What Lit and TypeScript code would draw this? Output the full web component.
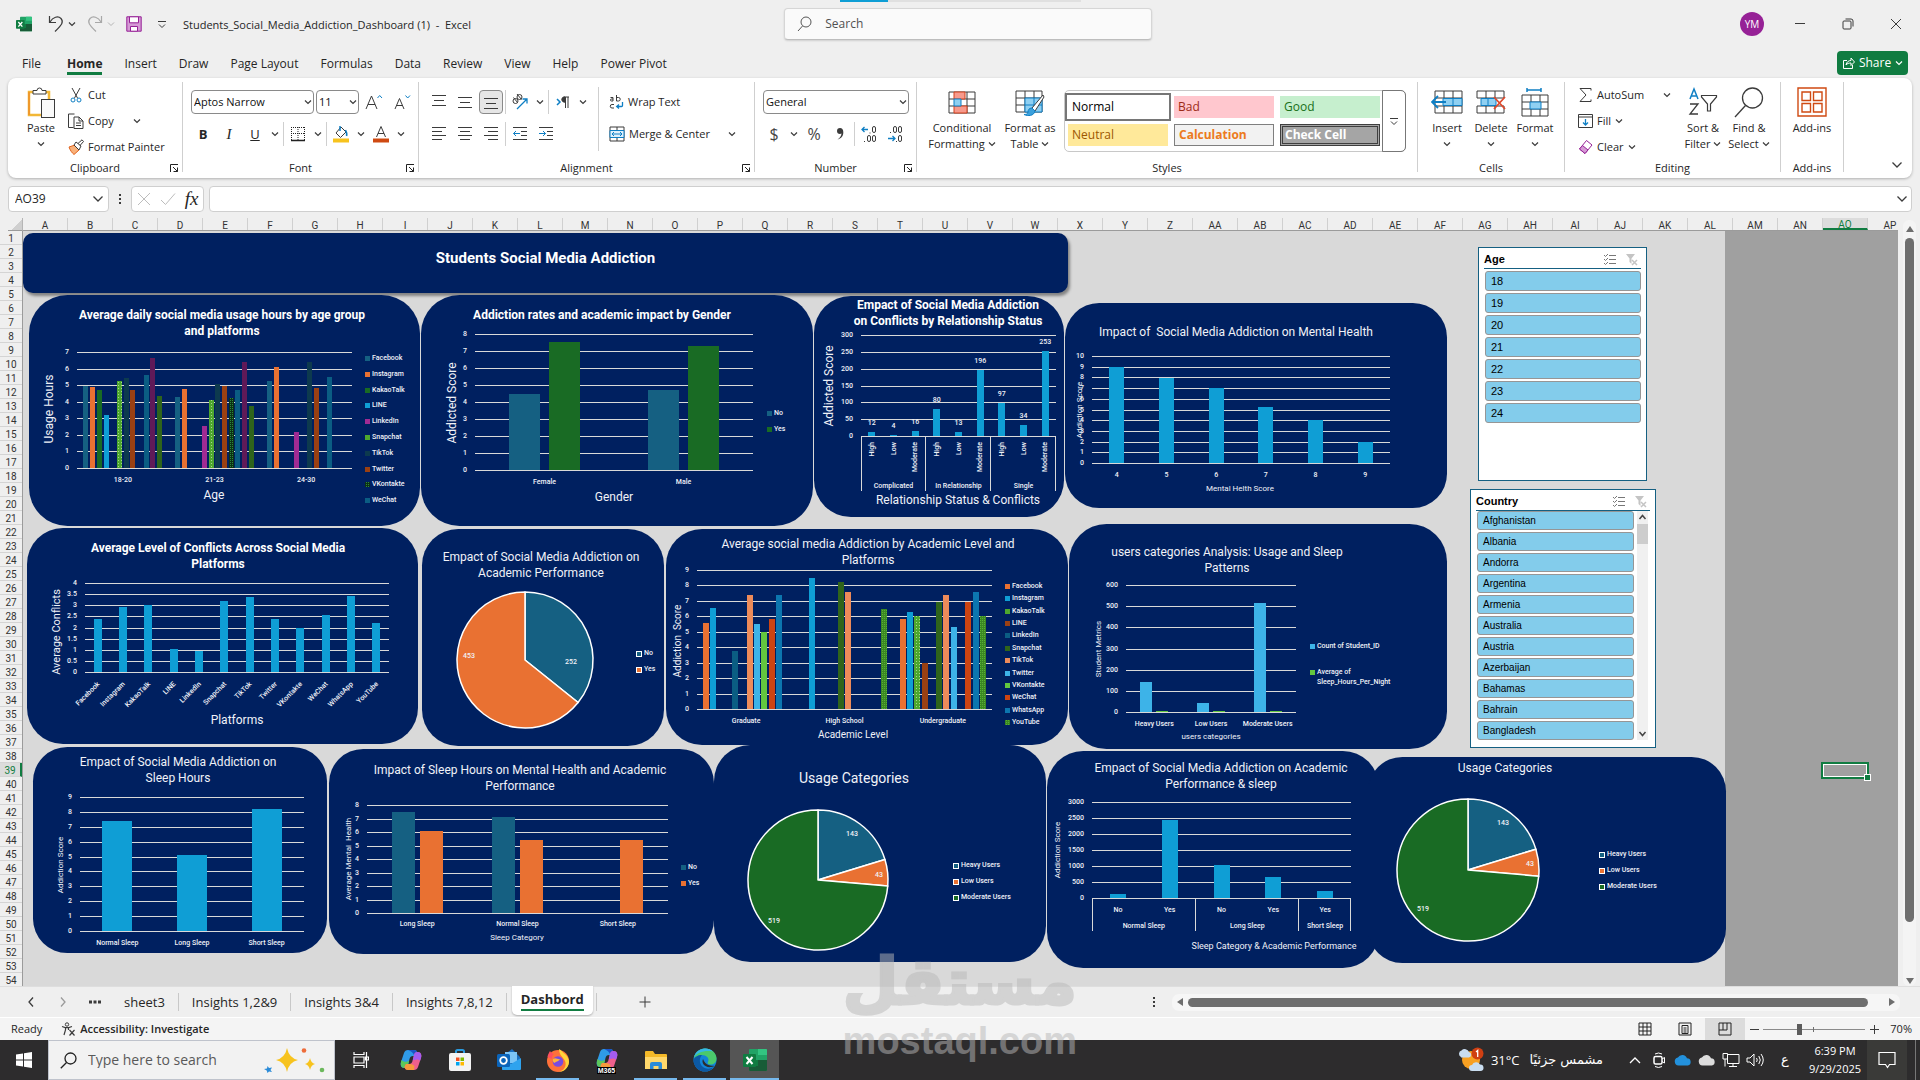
import { LitElement, html, svg, css, nothing, TemplateResult } from "lit";
import { customElement, property } from "lit/decorators.js";
import { styleMap } from "lit/directives/style-map.js";

/* ---------- palette ---------- */
const TEAL = "#156082";
const ORANGE = "#E97132";
const GREEN = "#196B24";
const BLUE = "#0F9ED5";
const SKY = "#3DB3E8";
const PURPLE = "#A02B93";
const RUST = "#9A4013";
const OLIVE = "#2F641B";
const DEEP = "#0B5D83";
const INK = "#0D3A4E";
const PLUM = "#601A58";
const PEACH = "#ED8B5A";
const BRICK = "#CC4412";
const OCEAN = "#0C76AF";

/* The sheet starts below and right of its headers. */
const ORIGIN_X = 23;
const ORIGIN_Y = 231;

interface TitleSpec { x: number; y: number; size: number; bold?: boolean; lines: string[] }
interface AxisTitle { x: number; y: number; size: number; text: string }
interface LegendSpec { x: number; y: number; gap: number; items: [string, string][]; boxed?: boolean }
interface ChartSpec {
  box: [number, number, number, number];
  title: TitleSpec;
  xTitle?: AxisTitle;
  yTitle?: AxisTitle;
  legend?: LegendSpec;
  plot?: [number, number, number, number];
  max?: number;
  step?: number;
  colors?: string[];
  data?: (number | null)[][];
  barWidth?: number;
  pitch?: number;
  labels?: string[];
  labelY?: number;
  labelTurn?: number;
  showValues?: boolean;
  groups?: { names: [string, number][]; y: number; bottom: number };
  pie?: { x: number; y: number; r: number; slices: [number, string, number, number][] };
}

const CHARTS: ChartSpec[] = [
  {
    box: [29, 295, 420, 526],
    title: { x: 222, y: 315, size: 12, bold: true, lines: ["Average daily social media usage hours by age group", "and platforms"] },
    xTitle: { x: 214, y: 495, size: 12, text: "Age" },
    yTitle: { x: 49, y: 409, size: 12, text: "Usage Hours" },
    plot: [77, 352, 352, 468], max: 7, step: 1,
    colors: [TEAL, ORANGE, GREEN, BLUE, PURPLE, "url(#dotLime)", INK, RUST, "url(#dotDark)", DEEP, PLUM, OLIVE],
    data: [
      [4.95, 4.9, 4.73, 3.22, null, 5.27, 5.45, 4.73, null, 5.63, 6.66, 4.37],
      [4.3, 4.79, null, null, 2.55, 4.12, 5.09, 4.97, 4.24, 4.73, 6.42, 3.76],
      [5.27, 6.12, null, null, 2.19, null, 6.42, 4.85, null, 5.51, null, null],
    ],
    barWidth: 5, pitch: 6.7, labels: ["18-20", "21-23", "24-30"], labelY: 480,
    legend: {
      x: 365, y: 358, gap: 15.8,
      items: [["Facebook", TEAL], ["Instagram", ORANGE], ["KakaoTalk", GREEN], ["LINE", BLUE], ["LinkedIn", PURPLE], ["Snapchat", "#4EA72E"], ["TikTok", INK], ["Twitter", RUST], ["VKontakte", "url(#dotDark)"], ["WeChat", DEEP]],
    },
  },
  {
    box: [421, 295, 813, 526],
    title: { x: 602, y: 315, size: 12, bold: true, lines: ["Addiction rates and academic impact by Gender"] },
    xTitle: { x: 614, y: 497, size: 12, text: "Gender" },
    yTitle: { x: 452, y: 403, size: 12, text: "Addicted Score" },
    plot: [475, 334, 753, 470], max: 8, step: 1,
    colors: [TEAL, GREEN], data: [[4.5, 7.55], [4.68, 7.32]], barWidth: 31, pitch: 40,
    labels: ["Female", "Male"], labelY: 482,
    legend: { x: 767, y: 413, gap: 16, items: [["No", TEAL], ["Yes", GREEN]] },
  },
  {
    box: [814, 296, 1064, 517],
    title: { x: 948, y: 305, size: 12, bold: true, lines: ["Empact of Social Media Addiction", "on Conflicts by Relationship Status"] },
    xTitle: { x: 958, y: 500, size: 12, text: "Relationship Status & Conflicts" },
    yTitle: { x: 829, y: 386, size: 12, text: "Addicted Score" },
    plot: [861, 335, 1056, 436], max: 300, step: 50,
    colors: [BLUE], data: [[12], [4], [16], [80], [13], [196], [97], [34], [253]], barWidth: 7, pitch: 7,
    labels: ["High", "Low", "Moderate", "High", "Low", "Moderate", "High", "Low", "Moderate"], labelY: 442, labelTurn: -90,
    showValues: true,
    groups: { names: [["Complicated", 3], ["In Relationship", 3], ["Single", 3]], y: 486, bottom: 491 },
  },
  {
    box: [1065, 303, 1447, 508],
    title: { x: 1236, y: 332, size: 12, lines: ["Impact of  Social Media Addiction on Mental Health"] },
    xTitle: { x: 1240, y: 488, size: 8, text: "Mental Helth Score" },
    yTitle: { x: 1079, y: 410, size: 8, text: "Addiction Score" },
    plot: [1092, 356, 1390, 463], max: 10, step: 1,
    colors: [BLUE], data: [[9], [7.95], [7], [5.25], [4], [2]], barWidth: 15, pitch: 15,
    labels: ["4", "5", "6", "7", "8", "9"], labelY: 475,
  },
  {
    box: [27, 528, 418, 744],
    title: { x: 218, y: 548, size: 12, bold: true, lines: ["Average Level of Conflicts Across Social Media", "Platforms"] },
    xTitle: { x: 237, y: 720, size: 12, text: "Platforms" },
    yTitle: { x: 56, y: 632, size: 11, text: "Average Conflicts" },
    plot: [85, 583, 389, 672], max: 4, step: 0.5,
    colors: [BLUE], data: [[2.4], [2.93], [2.99], [1.02], [0.93], [3.21], [3.39], [2.4], [2], [2.54], [3.43], [2.18]], barWidth: 8, pitch: 8,
    labels: ["Facebook", "Instagram", "KakaoTalk", "LINE", "LinkedIn", "Snapchat", "TikTok", "Twitter", "VKontakte", "WeChat", "WhatsApp", "YouTube"],
    labelY: 683, labelTurn: -45,
  },
  {
    box: [422, 529, 664, 746],
    title: { x: 541, y: 557, size: 12, lines: ["Empact of Social Media Addiction on", "Academic Performance"] },
    pie: { x: 525, y: 660, r: 68, slices: [[252, TEAL, 571, 662], [453, ORANGE, 469, 656]] },
    legend: { x: 636, y: 653, gap: 16, boxed: true, items: [["No", TEAL], ["Yes", ORANGE]] },
  },
  {
    box: [666, 529, 1068, 745],
    title: { x: 868, y: 544, size: 12, lines: ["Average social media Addiction by Academic Level and", "Platforms"] },
    xTitle: { x: 853, y: 734, size: 10, text: "Academic Level" },
    yTitle: { x: 677, y: 641, size: 10, text: "Addiction  Score" },
    plot: [697, 570, 992, 709], max: 9, step: 1,
    colors: [ORANGE, BLUE, "url(#dotLime)", RUST, DEEP, OLIVE, PEACH, SKY, "#63C73F", BRICK, OCEAN, "url(#dotMoss)"],
    data: [
      [5.6, 6.57, null, null, 3.78, null, 7.35, 5.53, 4.97, 5.8, 7.4, null],
      [null, 8.45, null, null, null, 8.2, 7.6, null, null, null, null, 6.5],
      [5.8, 6.3, 6, 2.95, null, 6.95, 7.4, 5.3, null, 6.95, 7.6, 6],
    ],
    barWidth: 6, pitch: 7.27, labels: ["Graduate", "High School", "Undergraduate"], labelY: 721,
    legend: {
      x: 1005, y: 586, gap: 12.36,
      items: [["Facebook", ORANGE], ["Instagram", BLUE], ["KakaoTalk", "#4EA72E"], ["LINE", RUST], ["LinkedIn", DEEP], ["Snapchat", OLIVE], ["TikTok", PEACH], ["Twitter", SKY], ["VKontakte", "#63C73F"], ["WeChat", BRICK], ["WhatsApp", OCEAN], ["YouTube", "url(#dotMoss)"]],
    },
  },
  {
    box: [1069, 524, 1447, 749],
    title: { x: 1227, y: 552, size: 12, lines: ["users categories Analysis: Usage and Sleep", "Patterns"] },
    xTitle: { x: 1211, y: 736, size: 8, text: "users categories" },
    yTitle: { x: 1098, y: 649, size: 8, text: "Student Metrics" },
    plot: [1126, 585, 1296, 712], max: 600, step: 100,
    colors: [SKY, "#63C73F"], data: [[143, 7], [44, 7], [517, 7]], barWidth: 12, pitch: 16,
    labels: ["Heavy Users", "Low Users", "Moderate Users"], labelY: 724,
    legend: { x: 1310, y: 646, gap: 26, items: [["Count of Student_ID", SKY], ["Average of\nSleep_Hours_Per_Night", "#63C73F"]] },
  },
  {
    box: [33, 747, 327, 953],
    title: { x: 178, y: 762, size: 12, lines: ["Empact of Social Media Addiction on", "Sleep Hours"] },
    yTitle: { x: 60, y: 865, size: 8, text: "Addiction Score" },
    plot: [80, 797, 304, 931], max: 9, step: 1,
    colors: [BLUE], data: [[7.41], [5.13], [8.22]], barWidth: 30, pitch: 30,
    labels: ["Normal Sleep", "Long Sleep", "Short Sleep"], labelY: 943,
  },
  {
    box: [329, 749, 714, 954],
    title: { x: 520, y: 770, size: 12, lines: ["Impact of Sleep Hours on Mental Health and Academic", "Performance"] },
    xTitle: { x: 517, y: 937, size: 8, text: "Sleep Category" },
    yTitle: { x: 348, y: 859, size: 8, text: "Average Mental  Health" },
    plot: [367, 805, 668, 913], max: 8, step: 1,
    colors: [TEAL, ORANGE], data: [[7.45, 6.1], [7.08, 5.44], [null, 5.44]], barWidth: 23, pitch: 28,
    labels: ["Long Sleep", "Normal Sleep", "Short Sleep"], labelY: 924,
    legend: { x: 681, y: 867, gap: 16, items: [["No", TEAL], ["Yes", ORANGE]] },
  },
  {
    box: [714, 745, 1046, 962],
    title: { x: 854, y: 778, size: 14, lines: ["Usage Categories"] },
    pie: { x: 818, y: 880, r: 70, slices: [[143, TEAL, 852, 834], [43, ORANGE, 879, 875], [519, GREEN, 774, 921]] },
    legend: { x: 953, y: 865, gap: 16, boxed: true, items: [["Heavy Users", TEAL], ["Low Users", ORANGE], ["Moderate Users", GREEN]] },
  },
  {
    box: [1047, 751, 1379, 968],
    title: { x: 1221, y: 768, size: 12, lines: ["Empact of Social Media Addiction on Academic", "Performance & sleep"] },
    xTitle: { x: 1274, y: 946, size: 9, text: "Sleep Category & Academic Performance" },
    yTitle: { x: 1057, y: 850, size: 8, text: "Addiction Score" },
    plot: [1092, 802, 1351, 898], max: 3000, step: 500,
    colors: [BLUE], data: [[135], [2448], [1042], [667], [229]], barWidth: 16, pitch: 16,
    labels: ["No", "Yes", "No", "Yes", "Yes"], labelY: 910,
    groups: { names: [["Normal Sleep", 2], ["Long Sleep", 2], ["Short Sleep", 1]], y: 926, bottom: 931 },
  },
  {
    box: [1368, 757, 1726, 963],
    title: { x: 1505, y: 768, size: 12, lines: ["Usage Categories"] },
    pie: { x: 1468, y: 870, r: 71, slices: [[143, TEAL, 1503, 823], [43, ORANGE, 1530, 864], [519, GREEN, 1423, 909]] },
    legend: { x: 1599, y: 854, gap: 16, boxed: true, items: [["Heavy Users", TEAL], ["Low Users", ORANGE], ["Moderate Users", GREEN]] },
  },
];

/* ---------- one chart card ---------- */
@customElement("sheet-chart")
class SheetChart extends LitElement {
  @property({ attribute: false }) spec!: ChartSpec;

  static styles = css`
    :host { display: block; }
    svg { display: block; width: 100%; height: 100%; overflow: visible; }
    text { font-family: Roboto, "Liberation Sans", sans-serif; fill: #f0f2f8; dominant-baseline: central; white-space: pre; }
    .small { font-size: 7px; font-weight: 500; }
    .mid { text-anchor: middle; }
    .end { text-anchor: end; }
    .bold { font-weight: 700; fill: #fff; }
    .grid { stroke: #d9d9d9; stroke-width: 1; shape-rendering: crispEdges; }
    .bar { shape-rendering: crispEdges; }
    .slice { stroke: #fff; stroke-width: 1.5; stroke-linejoin: round; }
  `;

  private axes(s: ChartSpec) {
    const [x0, y1, x1, y0] = s.plot!;
    const max = s.max!, step = s.step!;
    const n = s.data!.length;
    const slot = (x1 - x0) / n;
    const scale = (v: number) => y0 - (v / max) * (y0 - y1);
    const ticks = Array.from({ length: Math.round(max / step) + 1 }, (_, i) => i * step);
    const span = (s.data![0].length - 1) * s.pitch! + s.barWidth!;
    let edge = 0;
    return svg`
      ${ticks.map((v) => svg`
        <line class="grid" x1=${x0} x2=${x1} y1=${Math.round(scale(v)) + 0.5} y2=${Math.round(scale(v)) + 0.5}></line>
        <text class="small end" x=${x0 - 8} y=${scale(v)}>${v}</text>`)}
      ${s.data!.map((row, g) => {
        const left = x0 + (g + 0.5) * slot - span / 2;
        return row.map((v, i) => v === null ? nothing : svg`
          <rect class="bar" x=${left + i * s.pitch!} y=${scale(v)} width=${s.barWidth!} height=${y0 - scale(v)} fill=${s.colors![i]}></rect>
          ${s.showValues ? svg`<text class="small mid" x=${x0 + (g + 0.5) * slot} y=${scale(v) - 9}>${v}</text>` : nothing}`);
      })}
      ${s.labels!.map((label, g) => {
        const cx = x0 + (g + 0.5) * slot;
        return s.labelTurn
          ? svg`<text class="small end" transform="translate(${cx + (s.labelTurn === -45 ? 1 : 0)} ${s.labelY!}) rotate(${s.labelTurn})">${label}</text>`
          : svg`<text class="small mid" x=${cx} y=${s.labelY!}>${label}</text>`;
      })}
      ${s.groups ? svg`
        <line class="grid" x1=${x0 + 0.5} x2=${x0 + 0.5} y1=${y0} y2=${s.groups.bottom}></line>
        ${s.groups.names.map(([name, count]) => {
          const from = x0 + edge * slot;
          edge += count;
          const to = x0 + edge * slot;
          return svg`<text class="small mid" x=${(from + to) / 2} y=${s.groups!.y}>${name}</text>
            <line class="grid" x1=${Math.round(to) - 0.5} x2=${Math.round(to) - 0.5} y1=${y0} y2=${s.groups!.bottom}></line>`;
        })}` : nothing}
    `;
  }

  private slices(s: ChartSpec) {
    const p = s.pie!;
    const total = p.slices.reduce((a, b) => a + b[0], 0);
    let angle = 0;
    const at = (a: number) => `${p.x + p.r * Math.sin(a)} ${p.y - p.r * Math.cos(a)}`;
    return svg`
      ${p.slices.map(([v, color]) => {
        const from = angle;
        angle += (v / total) * Math.PI * 2;
        return svg`<path class="slice" fill=${color} d="M${p.x} ${p.y}L${at(from)}A${p.r} ${p.r} 0 ${angle - from > Math.PI ? 1 : 0} 1 ${at(angle)}Z"></path>`;
      })}
      ${p.slices.map(([v, , x, y]) => svg`<text class="small mid" x=${x} y=${y}>${v}</text>`)}
    `;
  }

  private legend(l: LegendSpec) {
    return l.items.map(([name, color], i) => {
      const y = l.y + i * l.gap;
      const lines = name.split("\n");
      return svg`
        <rect class="bar" x=${l.x} y=${Math.round(y) - 2} width="5" height="5" fill=${color} stroke=${l.boxed ? "#fff" : "none"}></rect>
        ${lines.map((t, k) => svg`<text class="small" x=${l.x + (l.boxed ? 8 : 7)} y=${y + k * 10}>${t}</text>`)}`;
    });
  }

  render() {
    const s = this.spec;
    const [l, t, r, b] = s.box;
    const w = r - l, h = b - t;
    return html`<svg viewBox="${l} ${t} ${w} ${h}" role="img" aria-label=${s.title.lines.join(" ")}>
      <defs>
        <pattern id="dotLime" width="3" height="3" patternUnits="userSpaceOnUse"><rect width="3" height="3" fill="#4EA72E"></rect><rect width="1" height="1" x="1" y="1" fill="#a5d78f"></rect></pattern>
        <pattern id="dotDark" width="2" height="2" patternUnits="userSpaceOnUse"><rect width="2" height="2" fill="#0d3015"></rect><rect width="1" height="1" fill="#2c8a3b"></rect></pattern>
        <pattern id="dotMoss" width="2" height="2" patternUnits="userSpaceOnUse"><rect width="2" height="2" fill="#3B8623"></rect><rect width="1" height="1" fill="#56b034"></rect></pattern>
      </defs>
      <rect x=${l} y=${t} width=${w} height=${h} rx=${Math.min(w, h) / 6} fill="#002060"></rect>
      ${s.plot ? this.axes(s) : nothing}
      ${s.pie ? this.slices(s) : nothing}
      ${s.legend ? this.legend(s.legend) : nothing}
      ${s.title.lines.map((line, i) => svg`<text class="mid ${s.title.bold ? "bold" : ""}" font-size=${s.title.size} x=${s.title.x} y=${s.title.y + i * 16}>${line}</text>`)}
      ${s.xTitle ? svg`<text class="mid" font-size=${s.xTitle.size} x=${s.xTitle.x} y=${s.xTitle.y}>${s.xTitle.text}</text>` : nothing}
      ${s.yTitle ? svg`<text class="mid" font-size=${s.yTitle.size} transform="translate(${s.yTitle.x} ${s.yTitle.y}) rotate(-90)">${s.yTitle.text}</text>` : nothing}
    </svg>`;
  }
}

/* ---------- slicer ---------- */
@customElement("sheet-slicer")
class SheetSlicer extends LitElement {
  @property() heading = "";
  @property({ attribute: false }) items: string[] = [];
  @property({ type: Boolean }) scrolls = false;

  static styles = css`
    :host { display: flex; flex-direction: column; box-sizing: border-box; background: #fff; border: 1px solid #156082; padding: 2px 5px; font-family: "Liberation Sans", sans-serif; color: #000; }
    header { display: flex; align-items: center; height: 18px; border-bottom: 1px solid #156082; font-size: 11px; font-weight: 700; gap: 6px; margin-bottom: 2px; }
    header span { flex: 1; }
    .tool { border: 0; background: none; padding: 0; width: 16px; height: 14px; }
    svg { display: block; }
    .body { display: flex; gap: 3px; }
    .list { flex: 1; display: flex; flex-direction: column; gap: 2px; padding-left: 1px; }
    .item { height: 20px; padding: 0 5px; text-align: left; font: 11px "Liberation Sans", sans-serif; background: #83cceb; border: 1px solid #969696; border-radius: 3px; color: #000; }
    :host([scrolls]) header { margin-bottom: 0; }
    :host([scrolls]) .item { height: 19px; font-size: 10px; }
    .bar { width: 11px; background: #f0f0f0; display: flex; flex-direction: column; align-items: center; margin-right: 2px; }
    .bar svg { flex: none; }
    .thumb { width: 11px; height: 20px; background: #cdcdcd; }
    .gap { flex: 1; }
  `;

  render() {
    return html`
      <header>
        <span>${this.heading}</span>
        <button class="tool" aria-label="Multi-select"><svg width="14" height="13" fill="none" stroke="#777"><path d="M6 2.500h7M6 6.500h7M6 10.500h7M1 2l1.500 1.500L5 1M1 6l1.500 1.500L5 5M1 10l1.500 1.500L5 9"/></svg></button>
        <button class="tool" aria-label="Clear filter"><svg width="14" height="13" fill="none"><path d="M1 1h9L6.500 5.500V11L4.500 9V5.500z" fill="#c4c4c4"/><path d="M7 7l5 5M12 7l-5 5" stroke="#c4c4c4" stroke-width="1.500"/></svg></button>
      </header>
      <div class="body">
        <div class="list">${this.items.map((i) => html`<button class="item">${i}</button>`)}</div>
        ${this.scrolls ? html`<div class="bar">
          <svg width="11" height="13" fill="none" stroke="#444" stroke-width="1.500"><path d="M2.500 8L5.500 4.500L8.500 8"/></svg>
          <div class="thumb"></div><div class="gap"></div>
          <svg width="11" height="13" fill="none" stroke="#444" stroke-width="1.500"><path d="M2.500 5L5.500 8.500L8.500 5"/></svg>
        </div>` : nothing}
      </div>`;
  }
}

/* ---------- icons ---------- */
const ic = (w: number, h: number, body: TemplateResult | unknown, stroke = "#3b3b3b") =>
  html`<svg class="ic" width=${w} height=${h} viewBox="0 0 ${w} ${h}" fill="none" stroke=${stroke}>${body}</svg>`;
const caret = () => ic(8, 6, svg`<path d="M1 1.500L4 4.500L7 1.500" stroke-width="1.200"/>`);
const chevron = () => ic(12, 8, svg`<path d="M1.500 1.500L6 6L10.500 1.500" stroke-width="1.300"/>`);
const launcher = () => html`<button class="launch" aria-label="More options">${ic(10, 10, svg`<path d="M1.500 9V1.500H9M4 4L8.500 8.500M8.500 4.500V8.500H4.500" stroke="#222"/>`)}</button>`;
const lines = (rows: [number, number][], y = 2, gap = 4) => ic(16, 16, svg`${rows.map(([a, b], i) => svg`<path d="M${a} ${y + i * gap + 0.5}H${b}"/>`)}`);

const excelIcon = (s: number) => html`<svg class="ic" width=${s} height=${s} viewBox="0 0 24 24">
  <rect x="6" y="1" width="18" height="22" rx="1" fill="#21a366"/><path d="M15 1h8a1 1 0 0 1 1 1v5h-9z" fill="#33c481"/><path d="M6 12h9v6H6z" fill="#107c41"/><path d="M15 12h9v6h-9z" fill="#185c37"/><path d="M6 18h18v4a1 1 0 0 1-1 1H7a1 1 0 0 1-1-1z" fill="#185c37"/>
  <rect x="0" y="6" width="13" height="13" rx="1" fill="#107c41"/><path d="M3.500 9l6 7M9.500 9l-6 7" stroke="#fff" stroke-width="2"/></svg>`;
const copilotIcon = () => html`<svg class="ic" width="24" height="24" viewBox="0 0 24 24">
  <path d="M9 2h6c2 0 3 1 3.500 3L17 8h-3c-2 0-3 1-3.500 3L9 17c-.5 2-1.500 3-3.500 3C2 20 1 17 2 14L5 5c.7-2 2-3 4-3z" fill="#2f9be8"/>
  <path d="M2.500 12C1 16.500 2 20 5.500 20 7.500 20 8.500 19 9 17l1.200-4.500C8 14.500 4.500 14 2.500 12z" fill="#5cc85a"/>
  <path d="M9 2h6c2 0 3 1 3.500 3L17 8h-1.500C14.500 5 12 3 9 2z" fill="#1b55c8"/>
  <path d="M15 22H9c-2 0-3-1-3.500-3L7 16h3c2 0 3-1 3.500-3L15 7c.5-2 1.500-3 3.500-3C22 4 23 7 22 10l-3 9c-.7 2-2 3-4 3z" fill="#ee5f8c"/>
  <path d="M15 7c.5-2 1.500-3 3.500-3C22 4 23 7 22 10l-1 3c-1-2-3-2-7.300-.5z" fill="#a45cf0"/>
  <path d="M15 22H9c-2 0-3-1-3.500-3L7 16h3c2 0 3 0 5.500 2z" fill="#f79a3c"/></svg>`;
const cloud = (fill: string) => html`<svg class="ic" width="18" height="12" viewBox="0 0 18 12"><path d="M4.500 11.500a4 4 0 0 1-.6-7.900A5 5 0 0 1 13 4.200a3.700 3.700 0 0 1 .8 7.300z" fill=${fill}/></svg>`;

const COLUMNS = Array.from({ length: 42 }, (_, i) => (i < 26 ? "" : "A") + String.fromCharCode(65 + (i % 26)));
const ROWS = Array.from({ length: 54 }, (_, i) => i + 1);
const TABS = ["File", "Home", "Insert", "Draw", "Page Layout", "Formulas", "Data", "Review", "View", "Help", "Power Pivot"];
const SHEETS = ["sheet3", "Insights 1,2&9", "Insights 3&4", "Insights 7,8,12"];
const COUNTRIES = ["Afghanistan", "Albania", "Andorra", "Argentina", "Armenia", "Australia", "Austria", "Azerbaijan", "Bahamas", "Bahrain", "Bangladesh"];

const place = (l: number, t: number, r: number, b: number) =>
  styleMap({ left: `${l - ORIGIN_X}px`, top: `${t - ORIGIN_Y}px`, width: `${r - l}px`, height: `${b - t}px` });

@customElement("app-root")
class AppRoot extends LitElement {
  static styles = css`
    :host { display: flex; flex-direction: column; height: 100vh; overflow: hidden; position: relative; background: #efefef; color: #262626; font-family: "Open Sans", "Noto Sans", sans-serif; font-size: 11px; line-height: 16px; }
    * { box-sizing: border-box; }
    button { font: inherit; color: inherit; background: none; border: 0; padding: 0; display: inline-flex; align-items: center; justify-content: center; flex: none; white-space: nowrap; }
    input, select { font: inherit; color: inherit; border: 0; background: none; padding: 0; margin: 0; outline: 0; min-width: 0; }
    select { appearance: none; }
    .ic { display: block; flex: none; }

    /* title bar */
    .titlebar { display: flex; align-items: center; height: 48px; padding: 0 0 0 16px; flex: none; position: relative; }
    .strip { position: absolute; top: 0; left: 840px; width: 241px; height: 2px; background: linear-gradient(to right, #0f9ed5 48px, #e0e0e0 48px); }
    .quick { display: flex; align-items: center; flex: 1 1 0; }
    .qa { width: 16px; height: 20px; }
    .qa.undo { margin-left: 16px; }
    .qc { width: 14px; height: 20px; margin: 0 8px 0 1px; }
    .qc.last { margin: 0 0 0 13px; }
    .file { margin-left: 14px; white-space: pre; padding-top: 1px; }
    .search { flex: none; width: 19.3%; height: 32px; border: 1px solid #d6d6d6; border-bottom-color: #bdbdbd; border-radius: 4px; background: #fafafa; display: flex; align-items: center; gap: 13px; padding: 0 12px; font-size: 12px; box-shadow: 0 1px 2px #0002; }
    .search input { flex: 1; }
    .search input::placeholder, .tsearch input::placeholder { color: inherit; opacity: 0.8; }
    .winctl { flex: 1 1 0; display: flex; justify-content: flex-end; align-items: center; }
    .avatar { width: 24px; height: 24px; border-radius: 50%; background: #962196; color: #fff; font-size: 10px; margin-right: 12px; }
    .wc { width: 48px; height: 48px; }

    /* tabs */
    .tabs { display: flex; align-items: center; height: 30px; padding: 0 12px 0 11px; flex: none; font-size: 12px; }
    .tabs nav { display: flex; flex: 1; padding-top: 1px; }
    .tab { padding: 0 11px; height: 22px; }
    .tab:first-child { margin-right: 4px; }
    .tab.on { font-weight: 700; padding: 3px 0 0; margin: 0 11px; border-bottom: 3px solid #107c41; }
    .share { height: 24px; width: 71px; background: #107c41; color: #fff; border-radius: 4px; gap: 4px; }
    .share .ic { stroke: #fff; }

    /* ribbon */
    .ribbon { flex: none; margin: 0 8px 8px; height: 100px; background: #fff; border-radius: 8px; box-shadow: 0 1px 3px #0004; display: flex; padding: 4px 0; }
    .group { display: flex; flex-direction: column; border-right: 1px solid #cfcfcf; flex: none; height: 90px; }
    .gbody { display: flex; height: 78px; flex: none; }
    .glabel { display: flex; align-items: center; justify-content: center; height: 16px; position: relative; }
    .launch { position: absolute; right: 3px; top: 3px; }
    .clip { width: 175px; } .font { width: 236px; } .align { width: 336px; } .num { width: 162px; }
    .styles { width: 501px; } .cells { width: 147px; } .edit { width: 216px; } .adds { width: 63px; }
    .fold { flex: 1; display: flex; justify-content: flex-end; align-items: flex-end; padding: 0 9px 5px 0; }
    .big { flex-direction: column; justify-content: flex-start; padding-top: 4px; line-height: 16px; }
    .big .pic { height: 32px; margin-bottom: 2px; display: flex; align-items: center; justify-content: center; }
    .big .row { display: flex; align-items: center; gap: 3px; height: 16px; }
    .col3 { display: flex; flex-direction: column; align-items: flex-start; }
    .col3 button { height: 26px; gap: 4px; }
    .col3 .pad { margin-left: 16px; }
    .rows { display: flex; flex-direction: column; gap: 8px; padding-top: 8px; }
    .row { display: flex; align-items: center; }
    .rows > .row { height: 24px; }
    .b { width: 26px; height: 24px; }
    .b.on { background: #e6e6e6; border: 1px solid #8a8a8a; border-radius: 4px; width: 24px; margin: 0 1px; }
    .c { width: 14px; height: 24px; }
    .sep { width: 1px; height: 24px; background: #cfcfcf; margin: 0 1px; flex: none; }
    .combo { display: flex; align-items: center; height: 24px; border: 1px solid #8a8a8a; border-radius: 4px; padding: 0 1px 0 2px; color: #111; }
    .combo select { flex: 1; }
    .letter { font-size: 16px; line-height: 20px; color: #444; }
    .paste { width: 52px; margin-left: 7px; }
    .clipcol { padding-left: 1px; }
    .fontrows { padding-left: 7px; }
    .fr1 { gap: 2px; padding-left: 1px; }
    .fam { width: 123px; }
    .siz { width: 43px; }
    .serif { font-family: "Liberation Serif", serif; font-size: 15px; }
    .fontrows b, .fontrows u { font-size: 13px; }
    .alignrows { padding-left: 7px; width: 179px; flex: none; }
    .wrap { padding: 3px 0 0 10px; border-left: 1px solid #cfcfcf; height: 64px; margin-top: 5px; }
    .lab { gap: 4px; }
    .pad2 { margin-left: 15px; }
    .numrows { padding-left: 8px; }
    .gen { width: 146px; }
    .money { margin-left: -2px; }
    .cf { width: 76px; margin-left: 7px; }
    .ft { width: 60px; }
    .ce { width: 44px; }
    .ce.first { margin-left: 7px; }
    .ecol { padding-left: 13px; width: 115px; flex: none; }
    .ed { width: 46px; }
    .ad { width: 62px; }

    .gallery { display: flex; width: 342px; height: 62px; border: 1px solid #c8c8c8; border-radius: 5px; margin: 8px 0 0 4px; font-size: 12px; flex: none; }
    .cellstyles { flex: 1; display: grid; grid-template-columns: 100px 100px 100px; gap: 6px 6px; padding: 5px 3px; align-content: start; }
    .cellstyles button { height: 22px; justify-content: flex-start; padding: 0 4px; }
    .s-normal { outline: 2px solid #767676; outline-offset: 1px; color: #000; }
    .s-bad { background: #ffc7ce; color: #9c2a16; }
    .s-good { background: #c6efce; color: #197019; }
    .s-neutral { background: #ffe99a; color: #9c5700; }
    .cellstyles .s-calc { background: #f2f2f2; color: #ec7a20; border: 1px solid #7f7f7f; font-weight: 700; }
    .cellstyles .s-check { background: #a5a5a5; color: #fff; border: 3px double #3f3f3f; font-weight: 700; padding: 0 2px; }
    .more { width: 24px; margin: -1px; height: 62px; border: 1px solid #777; border-radius: 0 5px 5px 0; }

    /* formula bar */
    .formula { display: flex; flex: none; height: 26px; margin: 0 8px 6px; font-size: 12px; }
    .field { background: #fff; border: 1px solid #cfcfcf; border-radius: 4px; display: flex; align-items: center; }
    .namebox { width: 101px; padding: 0 4px 0 6px; }
    .namebox input { flex: 1; width: 60px; }
    .dots { width: 22px; }
    .fx { width: 73px; margin-right: 5px; justify-content: space-around; }
    .fxi { font-family: "Liberation Serif", serif; font-size: 19px; }
    .entry { flex: 1; padding: 0 3px 0 6px; }
    .entry input { flex: 1; }

    /* sheet */
    .grid { flex: 1; min-height: 0; display: grid; grid-template-columns: 23px 1fr 22px; grid-template-rows: 13px 1fr; font-family: Roboto, "Liberation Sans", sans-serif; font-size: 10px; }
    .corner { background: linear-gradient(135deg, transparent 60%, #cfcfcf 60%); border-bottom: 1px solid #9b9b9b; border-right: 1px solid #b5b5b5; margin-left: 8px; }
    .colhead { display: flex; overflow: hidden; border-bottom: 1px solid #9b9b9b; line-height: 15px; color: #333; }
    .colhead span { width: 45px; flex: none; text-align: center; border-right: 1px solid #d0d0d0; }
    .colhead .sel { background: #dcdcdc; color: #107c41; border-bottom: 2px solid #107c41; line-height: 13px; }
    .rowhead { overflow: hidden; border-right: 1px solid #9b9b9b; display: flex; flex-direction: column; color: #333; }
    .rowhead span { height: 14px; line-height: 15px; text-align: center; border-bottom: 1px solid #d4d4d4; flex: none; }
    .rowhead .sel { background: #dcdcdc; color: #107c41; border-right: 2px solid #107c41; }
    .canvas { position: relative; overflow: hidden; background: #a0a0a0; }
    .paper { position: absolute; left: 0; top: 0; bottom: 0; width: 1702px; background: #d9d9d9; }
    .banner { position: absolute; background: #002060; border-radius: 10px; box-shadow: 2px 3px 3px #0006; color: #fff; font-size: 15px; font-weight: 700; text-align: center; margin: 0; padding-top: 16px; line-height: 18px; }
    .obj { position: absolute; }
    .cursor { position: absolute; border: 2px solid #107c41; outline: 1px solid #fff; outline-offset: -3px; }
    .cursor::after { content: ""; position: absolute; right: -4px; bottom: -4px; width: 5px; height: 5px; background: #107c41; border: 1px solid #fff; }
    .vscroll { grid-row: 1 / 3; grid-column: 3; display: flex; flex-direction: column; align-items: center; background: #f4f4f4; border-radius: 6px; margin: 2px 4px 0 5px; padding: 5px 0 1px; gap: 5px; }
    .vthumb { width: 9px; flex: 1; background: #6e6e6e; border-radius: 5px; margin-bottom: 50px; }

    /* sheet tabs */
    .sheets { flex: none; height: 32px; display: flex; align-items: center; font-size: 13px; border-top: 1px solid #dedede; border-bottom: 1px solid #fff; }
    .nav { width: 32px; height: 24px; }
    .nav.first { margin-left: 15px; }
    .st { height: 18px; border-right: 1px solid #c8c8c8; padding: 0 13px; }
    .active { height: 29px; align-self: flex-start; margin: -1px 3px 0 5px; padding: 0 9px; background: #fff; border-radius: 0 0 5px 5px; box-shadow: 0 1px 2px #0004; font-weight: 700; }
    .active span { border-bottom: 2px solid #107c41; line-height: 19px; }
    .plus { width: 98px; border-left: 1px solid #c8c8c8; height: 18px; }
    .hscroll { margin-left: auto; width: 40%; display: flex; align-items: center; gap: 5px; padding: 0 20px 0 0; }
    .htrack { flex: 1; display: flex; align-items: center; gap: 4px; background: #f6f6f6; height: 17px; border-radius: 7px; padding: 0 4px; margin-left: 11px; }
    .hthumb { flex: 1; height: 9px; background: #6e6e6e; border-radius: 5px; margin-right: 16px; }

    /* status bar */
    .status { flex: none; height: 22px; display: flex; align-items: center; background: #f4f4f4; padding: 0 8px 0 11px; }
    .status .acc { margin-left: 19px; gap: 4px; font-weight: 600; }
    .views { margin-left: auto; display: flex; }
    .view { width: 40px; height: 22px; }
    .view.on { background: #dcdcdc; }
    .zoomer { display: flex; align-items: center; gap: 2px; margin-left: 2px; }
    .zoomer button { width: 14px; height: 20px; }
    .zoomer input { appearance: none; width: 102px; height: 14px; background: linear-gradient(#6e6e6e, #6e6e6e) 50px 50% / 1px 5px no-repeat, linear-gradient(#8a8a8a, #8a8a8a) 0 50% / 100% 1px no-repeat; }
    .zoomer input::-webkit-slider-thumb { appearance: none; width: 5px; height: 11px; background: #5c5c5c; }
    .pct { width: 29px; text-align: right; }

    /* task bar */
    .taskbar { flex: none; height: 40px; display: flex; align-items: center; background: #2d2c2d; color: #fff; }
    .start { width: 48px; height: 40px; }
    .tsearch { width: 287px; height: 40px; background: #f2f2f2; border: 1px solid #bfc3cc; color: #333; display: flex; align-items: center; gap: 11px; padding: 0 9px 0 11px; font-size: 14px; }
    .tsearch input { flex: 1; }
    .app { width: 49px; height: 40px; border-bottom: 2px solid transparent; padding-top: 2px; }
    .app.view { width: 51px; }
    .app.open { border-image: linear-gradient(to right, transparent 4px, #76b9ed 4px, #76b9ed 45px, transparent 45px) 1; }
    .app.now { background: #555; border-bottom-color: #76b9ed; margin-left: 1px; }
    .m365 { display: flex; flex-direction: column; align-items: center; }
    .m365 small { background: #000; color: #fff; font: 700 7px "Liberation Sans", sans-serif; margin-top: -4px; padding: 0 1px; position: relative; }
    .tray { margin-left: auto; display: flex; align-items: center; }
    .weather { gap: 7px; margin-right: 20px; font-size: 13px; direction: ltr; }
    .weather bdi { font-family: "DejaVu Sans", sans-serif; margin-left: 3px; }
    .t { width: 24px; height: 40px; }
    .lang { width: 36px; height: 40px; font-family: "DejaVu Sans", sans-serif; font-size: 13px; }
    .clock { flex-direction: column; width: 64px; line-height: 18px; }
    .note { width: 40px; height: 40px; background: #3a3a38; margin-right: 8px; }
    .peek { width: 5px; height: 40px; border-left: 1px solid #777; }

    /* translucent mark laid over the page */
    .mark { position: absolute; left: 44%; bottom: 20px; width: 230px; color: #b8b8b8; opacity: 0.5; pointer-events: none; font-weight: 700; display: flex; flex-direction: column; align-items: center; gap: 8px; white-space: nowrap; }
    .mark .ar { font-family: "DejaVu Sans", sans-serif; font-size: 64px; line-height: 64px; -webkit-text-stroke: 3px #b8b8b8; stroke-linejoin: round; }
    .mark .en { font-family: "Liberation Sans", sans-serif; font-size: 38px; line-height: 38px; }
  `;

  private titleBar() {
    return html`<header class="titlebar">
      <div class="strip"></div>
      <div class="quick">
        ${excelIcon(16)}
        <button class="qa undo" aria-label="Undo">${ic(16, 18, svg`<path d="M1.500 1v6.500H8M2 7C5 2 10 .5 13 3.500c3 3.500 1 6-6 13" stroke-width="1.200"/>`)}</button>
        <button class="qc" aria-label="Undo history">${caret()}</button>
        <button class="qa" aria-label="Redo">${ic(16, 18, svg`<path d="M14.500 1v6.500H8M14 7C11 2 6 .5 3 3.500c-3 3.500-1 6 6 13" stroke-width="1.200"/>`, "#a8a8a8")}</button>
        <button class="qc" aria-label="Redo history">${ic(8, 6, svg`<path d="M1 1.500L4 4.500L7 1.500"/>`, "#b5b5b5")}</button>
        <button class="qa" aria-label="Save">${ic(16, 16, svg`<path d="M.8.8h14.400v14.400H.8z" fill="#d59ad5"/><path d="M3.500.8h9v6h-9zM4.500 10.500h7v4.700h-7z" fill="#fff"/>`, "#962196")}</button>
        <button class="qc last" aria-label="Customize">${ic(10, 9, svg`<path d="M1 1.500h8M2 4.500l3 3 3-3"/>`)}</button>
        <span class="file">Students_Social_Media_Addiction_Dashboard (1)  -  Excel</span>
      </div>
      <label class="search">${ic(15, 16, svg`<circle cx="9" cy="6" r="5"/><path d="M5.500 10L1 15"/>`, "#555")}<input type="search" placeholder="Search" aria-label="Search"></label>
      <div class="winctl">
        <button class="avatar">YM</button>
        <button class="wc" aria-label="Minimize">${ic(12, 12, svg`<path d="M1 5.500h10"/>`)}</button>
        <button class="wc" aria-label="Restore">${ic(12, 12, svg`<rect x="1" y="3" width="8" height="8" rx="1"/><path d="M3.500 1H9q2 0 2 2v5.500"/>`)}</button>
        <button class="wc" aria-label="Close">${ic(12, 12, svg`<path d="M1 1l10 10M11 1L1 11"/>`)}</button>
      </div>
    </header>`;
  }

  private tabRow() {
    return html`<div class="tabs">
      <nav>${TABS.map((t) => html`<button class="tab ${t === "Home" ? "on" : ""}">${t}</button>`)}</nav>
      <button class="share">${ic(13, 14, svg`<path d="M5 4.500H1.500v8h9V9M4 9c.5-3 2.500-4.500 5-4.500V2l3.500 4L9 9.500V7C7 7 5 7.500 4 9z"/>`)}Share ${caret()}</button>
    </div>`;
  }

  private big(cls: string, pic: unknown, label: string, second: string | null) {
    return html`<button class="big ${cls}"><span class="pic">${pic}</span><span>${label}</span><span class="row">${second === null ? nothing : html`${second ? html`<span>${second}</span>` : nothing}${caret()}`}</span></button>`;
  }

  private ribbon() {
    const gridBase = svg`<path d="M1 1h26v21H1zM1 8h26M1 15h26M10 1v21M19 1v21" fill="#fff"/>`;
    return html`<section class="ribbon">
      <div class="group clip">
        <div class="gbody">
          ${this.big("paste", ic(28, 31, svg`<path d="M2 5h20v23H2z" fill="#fff" stroke="#f2b736" stroke-width="2.500"/><path d="M2 28V5" stroke="#ec7a20" stroke-width="1"/><path d="M6 7V3.500h4a2.500 2.500 0 0 1 5 0h4V7z" fill="#fff"/><rect x="14.500" y="12.500" width="13" height="18" fill="#fafafa"/>`), "Paste", "")}
          <div class="col3 clipcol">
            <button>${ic(16, 16, svg`<path d="M4 1l5.500 10M12 1L6.500 11"/><circle cx="5" cy="13" r="2" stroke="#0f7fc4"/><circle cx="11" cy="13" r="2" stroke="#0f7fc4"/>`)}Cut</button>
            <div class="row"><button>${ic(16, 16, svg`<path d="M5.500 14.500h-5V1h6"/><path d="M6 4h5l4 4v7.500H6z" fill="#fff"/><path d="M11 4v4h4M8 10h5M8 12.500h5"/>`)}Copy</button><button class="c pad" aria-label="Copy options">${caret()}</button></div>
            <button>${ic(16, 16, svg`<path d="M1 8l6-2 4 5-5 4.500C4 14 2 11 1 8z" fill="#f9b17a" stroke="#e0621d"/><path d="M6 6l2-3 5 4-2 4z" fill="#fff"/><path d="M10 4.500L14 .8 15.500 2.500 12 6.500"/>`)}Format Painter</button>
          </div>
        </div>
        <div class="glabel">Clipboard${launcher()}</div>
      </div>

      <div class="group font">
        <div class="gbody"><div class="rows fontrows">
          <div class="row fr1">
            <label class="combo fam"><select aria-label="Font"><option>Aptos Narrow</option></select>${caret()}</label>
            <label class="combo siz"><select aria-label="Font size"><option>11</option></select>${caret()}</label>
            <button class="b" aria-label="Increase font size">${ic(18, 18, svg`<path d="M1 16L6.500 3 12 16M3 11.500h7"/><path d="M12.500 5l2.200-2.500L17 5" stroke="#0f7fc4"/>`)}</button>
            <button class="b" aria-label="Decrease font size">${ic(18, 18, svg`<path d="M2 16L6.500 5.500 11 16M3.500 12.500h6"/><path d="M12.500 2.500L14.700 5 17 2.500" stroke="#0f7fc4"/>`)}</button>
          </div>
          <div class="row">
            <button class="b"><b>B</b></button><button class="b"><i class="serif">I</i></button><button class="b"><u>U</u></button><button class="c" aria-label="Underline options">${caret()}</button>
            <span class="sep"></span>
            <button class="b" aria-label="Borders">${ic(16, 16, svg`<path d="M1.500 1v13M8 1v13M14.500 1v13M1 1.500h14M1 7.500h14" stroke-dasharray="1 1"/><path d="M1 14.500h14" stroke-width="1.500"/>`, "#222")}</button><button class="c" aria-label="Border options">${caret()}</button>
            <span class="sep"></span>
            <button class="b" aria-label="Fill color">${ic(16, 18, svg`<path d="M3 8l5-6 5 5-5.500 5.500z"/><path d="M7 1v5M12.500 5c1 2 2 4 1 6" stroke="#0f7fc4" stroke-width="1.500"/><path d="M0 15.500h16" stroke="#f7c31e" stroke-width="4"/>`)}</button><button class="c" aria-label="Fill options">${caret()}</button>
            <button class="b" aria-label="Font color">${ic(16, 18, svg`<path d="M3.500 12L8 1.500 12.500 12M5 8.500h6"/><path d="M0 15.500h16" stroke="#cf4a12" stroke-width="4"/>`)}</button><button class="c" aria-label="Font color options">${caret()}</button>
          </div>
        </div></div>
        <div class="glabel">Font${launcher()}</div>
      </div>

      <div class="group align">
        <div class="gbody">
          <div class="rows alignrows">
            <div class="row">
              <button class="b" aria-label="Top align">${lines([[1, 15], [3, 13], [1, 15]], 1, 5)}</button>
              <button class="b" aria-label="Middle align">${lines([[1, 15], [3, 13], [1, 15]], 3, 5)}</button>
              <button class="b on" aria-label="Bottom align">${lines([[1, 15], [3, 13], [1, 15]], 4, 5)}</button>
              <span class="sep"></span>
              <button class="b" aria-label="Orientation">${ic(18, 18, svg`<circle cx="4.500" cy="8" r="2.500"/><circle cx="8.500" cy="4" r="2.500"/><path d="M2.500 4.500l4 5M6 1l4.500 5.500"/><path d="M6 16L15.500 6.500M11.500 6h4.500v4.500" stroke="#0f7fc4" stroke-width="1.300"/>`)}</button><button class="c" aria-label="Orientation options">${caret()}</button>
              <span class="sep"></span>
              <button class="b" aria-label="Text direction">${ic(16, 14, svg`<path d="M2 4l3 3-3 3" stroke="#0f7fc4" stroke-width="1.500"/><path d="M14 2H9.500a2.500 2.500 0 0 0 0 5H10V2M10.500 2v11M13 2v11"/><path d="M7 4.500a2.500 2.500 0 0 1 3-2.500v5A2.500 2.500 0 0 1 7 4.500z" fill="#3b3b3b"/>`)}</button><button class="c" aria-label="Direction options">${caret()}</button>
            </div>
            <div class="row">
              <button class="b" aria-label="Align left">${lines([[1, 15], [1, 11], [1, 15], [1, 11]], 1, 4)}</button>
              <button class="b" aria-label="Center">${lines([[1, 15], [3, 13], [1, 15], [3, 13]], 1, 4)}</button>
              <button class="b" aria-label="Align right">${lines([[1, 15], [5, 15], [1, 15], [5, 15]], 1, 4)}</button>
              <span class="sep"></span>
              <button class="b" aria-label="Decrease indent">${ic(16, 16, svg`<path d="M1 1.500h14M9 5.500h6M9 9.500h6M1 13.500h14"/><path d="M8 7.500H1.500M4 5L1.500 7.500 4 10" stroke="#0f7fc4"/>`)}</button>
              <button class="b" aria-label="Increase indent">${ic(16, 16, svg`<path d="M1 1.500h14M9 5.500h6M9 9.500h6M1 13.500h14"/><path d="M1 7.500h6.500M5 5l2.500 2.500L5 10" stroke="#0f7fc4"/>`)}</button>
            </div>
          </div>
          <div class="rows wrap">
            <div class="row"><button class="lab">${ic(15, 16, svg`<path d="M1.500 3.500h2.500V7H2.500a1 1 0 0 1 0-2H4M7.500 1v6h2a1.700 1.700 0 0 0 0-3.500h-2M5 10.500H3A1.700 1.700 0 0 0 3 14h2"/><path d="M13.500 8v3.500q0 1-1 1H8M10 10.500l-2.300 2 2.300 2" stroke="#0f7fc4" stroke-width="1.300"/>`)}Wrap Text</button></div>
            <div class="row"><button class="lab">${ic(16, 16, svg`<path d="M1 1h14v14H1zM8 1v3M8 12v3M1 4.500h14M1 11.500h14"/><path d="M1 4.500h14v7H1z" fill="#dff0fb" stroke="#0f7fc4"/><path d="M3 8h10M5 6L3 8l2 2M11 6l2 2-2 2" stroke="#0f7fc4"/>`)}Merge &amp; Center</button><button class="c pad2" aria-label="Merge options">${caret()}</button></div>
          </div>
        </div>
        <div class="glabel">Alignment${launcher()}</div>
      </div>

      <div class="group num">
        <div class="gbody"><div class="rows numrows">
          <div class="row"><label class="combo gen"><select aria-label="Number format"><option>General</option></select>${caret()}</label></div>
          <div class="row money">
            <button class="b letter">$</button><button class="c" aria-label="Currency options">${caret()}</button><button class="b letter">%</button>
            <button class="b" aria-label="Comma style">${ic(10, 14, svg`<path d="M5 1a3 3 0 0 0 0 6c.6 0 1-.1 1.500-.4C6.300 9 5 11 2.500 12.500 7 11.500 8.500 8 8.300 5 8.200 2.500 7 1 5 1z" fill="#3b3b3b" stroke="none"/>`)}</button>
            <span class="sep"></span>
            <button class="b" aria-label="Increase decimal">${ic(16, 18, svg`<path d="M7 4.500H1M3.500 2L1 4.500 3.500 7" stroke="#0f7fc4" stroke-width="1.300"/><rect x="11.500" y="1.500" width="3" height="6" rx="1.500"/><rect x="6.500" y="10.500" width="3" height="6" rx="1.500"/><rect x="11.500" y="10.500" width="3" height="6" rx="1.500"/><path d="M9 7.500v1M3.500 16v1"/>`)}</button>
            <button class="b" aria-label="Decrease decimal">${ic(16, 18, svg`<rect x="6.500" y="1.500" width="3" height="6" rx="1.500"/><rect x="11.500" y="1.500" width="3" height="6" rx="1.500"/><rect x="11.500" y="10.500" width="3" height="6" rx="1.500"/><path d="M3.500 7v1M9.500 16v1"/><path d="M1 13.500h7M5.500 11L8 13.500 5.500 16" stroke="#0f7fc4" stroke-width="1.300"/>`)}</button>
          </div>
        </div></div>
        <div class="glabel">Number${launcher()}</div>
      </div>

      <div class="group styles">
        <div class="gbody">
          ${this.big("cf", ic(28, 23, svg`${gridBase}<path d="M6 1h11v7H6zM6 15h13v7H6z" fill="#f79a8c" stroke="#d0401c"/><path d="M6 8h7v7H6z" fill="#8fd0f2" stroke="#0f7fc4"/>`), "Conditional", "Formatting")}
          ${this.big("ft", ic(30, 28, svg`<g transform="translate(0 2)">${gridBase}<path d="M10 8h17v14H10z" fill="#8fd0f2" stroke="#0f7fc4"/><path d="M10 15h17M19 8v14" stroke="#0f7fc4"/></g><path d="M28 7L17 20l3 3L29 9z" fill="#fff"/><path d="M17 20c-3 0-4 2-4 4s-2 2.500-4 2.500c4 2 10 1.500 11-3.500z" fill="#3aa0dc" stroke="#0f7fc4"/>`), "Format as", "Table")}
          <div class="gallery">
            <div class="cellstyles">
              <button class="s-normal">Normal</button><button class="s-bad">Bad</button><button class="s-good">Good</button>
              <button class="s-neutral">Neutral</button><button class="s-calc">Calculation</button><button class="s-check">Check Cell</button>
            </div>
            <button class="more" aria-label="More styles">${ic(10, 9, svg`<path d="M1 1.500h8M2 4.500l3 3 3-3"/>`)}</button>
          </div>
        </div>
        <div class="glabel">Styles</div>
      </div>

      <div class="group cells">
        <div class="gbody">
          ${this.big("ce first", ic(32, 24, svg`<path d="M4 1h27v22H4zM13 1v22M22 1v22M4 8h27M4 16h27" fill="#fff"/><path d="M12 8.500h19v7H12z" fill="#8fd0f2" stroke="#0f7fc4"/><path d="M22 8v8" stroke="#0f7fc4"/><path d="M15 12H2M7 6l-6 6 6 6" stroke="#0f7fc4" stroke-width="1.800"/>`), "Insert", "")}
          ${this.big("ce", ic(32, 24, svg`<path d="M2 1h27v7M2 1v7h27M2 16v7h27v-7H2M11 1v7M20 1v7M11 16v7M20 16v7" fill="#fff"/><path d="M6 8.500h15v7H6z" fill="#8fd0f2" stroke="#0f7fc4"/><path d="M13 8v8" stroke="#0f7fc4"/><path d="M19 7l11 12M30 7L19 19" stroke="#e0492c" stroke-width="1.800"/>`), "Delete", "")}
          ${this.big("ce", ic(30, 30, svg`<path d="M7 1v4M21 1v4M7 3h14" stroke="#0f7fc4" stroke-width="1.500"/><g transform="translate(1 7)">${gridBase}<path d="M9 8h11v7H9z" fill="#8fd0f2" stroke="#0f7fc4"/></g>`), "Format", "")}
        </div>
        <div class="glabel">Cells</div>
      </div>

      <div class="group edit">
        <div class="gbody">
          <div class="col3 ecol">
            <div class="row"><button>${ic(15, 16, svg`<path d="M13 3.500V1.500H2L8 8l-6 6.500h11v-2"/>`)}AutoSum</button><button class="c pad" aria-label="AutoSum options">${caret()}</button></div>
            <button>${ic(15, 16, svg`<path d="M.5 1.500h14v13H.5zM.5 4h14"/><path d="M7.500 6v6M5 9.500L7.500 12 10 9.500" stroke="#0f7fc4" stroke-width="1.300"/>`)}Fill ${caret()}</button>
            <button>${ic(15, 16, svg`<path d="M8.500 1.500L14 6 7 14.500 1.500 10z" fill="#fff" stroke="#962196"/><path d="M4.500 6.500L10 11l-3 3.500L1.500 10z" fill="#d59ad5" stroke="#962196"/>`)}Clear ${caret()}</button>
          </div>
          ${this.big("ed", ic(30, 30, svg`<path d="M2 12L6 2l4 10M3.500 9h5" stroke="#0f7fc4" stroke-width="1.500"/><path d="M2 17h8L2 27h8" stroke-width="1.300"/><path d="M13.500 8.500h15v1.500L22.500 17v7h-3v-7l-6-7z" stroke-width="1.200"/>`), "Sort &", "Filter")}
          ${this.big("ed", ic(30, 32, svg`<circle cx="18.500" cy="12" r="10" stroke-width="1.300"/><path d="M11.500 19.500L1 31" stroke-width="1.300"/>`), "Find &", "Select")}
        </div>
        <div class="glabel">Editing</div>
      </div>

      <div class="group adds">
        <div class="gbody">${this.big("ad", ic(30, 30, svg`<path d="M1 1h28v28H1zM5 5h8.500v8.500H5zM16.500 5H25v8.500h-8.500zM5 16.500h8.500V25H5zM16.500 16.500H25V25h-8.500z" stroke="#cf4a12" stroke-width="1.400"/>`), "Add-ins", null)}</div>
        <div class="glabel">Add-ins</div>
      </div>
      <div class="fold"><button aria-label="Collapse ribbon">${chevron()}</button></div>
    </section>`;
  }

  private formulaBar() {
    return html`<div class="formula">
      <div class="field namebox"><input aria-label="Name box" value="AO39">${chevron()}</div>
      <button class="dots" aria-label="Resize">${ic(4, 12, svg`<path d="M2 1v2M2 5v2M2 9v2" stroke-width="2"/>`)}</button>
      <div class="field fx">
        <button aria-label="Cancel">${ic(14, 14, svg`<path d="M1 1l12 12M13 1L1 13"/>`, "#bdbdbd")}</button>
        <button aria-label="Enter">${ic(16, 14, svg`<path d="M1 8l4.500 4.500L15 1.500"/>`, "#bdbdbd")}</button>
        <button class="fxi"><i>fx</i></button>
      </div>
      <div class="field entry"><input aria-label="Formula">${chevron()}</div>
    </div>`;
  }

  private sheet() {
    return html`<main class="grid">
      <div class="corner"></div>
      <div class="colhead">${COLUMNS.map((c) => html`<span class=${c === "AO" ? "sel" : ""}>${c}</span>`)}</div>
      <div class="vscroll">
        ${ic(10, 8, svg`<path d="M5 1l4 6H1z" fill="#6e6e6e"/>`, "none")}
        <div class="vthumb"></div>
        ${ic(10, 8, svg`<path d="M5 7l4-6H1z" fill="#6e6e6e"/>`, "none")}
      </div>
      <div class="rowhead">${ROWS.map((r) => html`<span class=${r === 39 ? "sel" : ""}>${r}</span>`)}</div>
      <div class="canvas">
        <div class="paper"></div>
        <h1 class="banner" style=${place(23, 233, 1068, 293)}>Students Social Media Addiction</h1>
        ${CHARTS.map((c) => html`<sheet-chart class="obj" .spec=${c} style=${place(...c.box)}></sheet-chart>`)}
        <sheet-slicer class="obj" heading="Age" .items=${["18", "19", "20", "21", "22", "23", "24"]} style=${place(1478, 247, 1647, 481)}></sheet-slicer>
        <sheet-slicer class="obj" scrolls heading="Country" .items=${COUNTRIES} style=${place(1470, 489, 1656, 748)}></sheet-slicer>
        <div class="cursor" style=${place(1821, 762, 1869, 779)}></div>
      </div>
    </main>`;
  }

  private sheetTabs() {
    return html`<div class="sheets">
      <button class="nav first" aria-label="Previous sheet">${ic(8, 12, svg`<path d="M6 1.500L2 6l4 4.500" stroke-width="1.300"/>`)}</button>
      <button class="nav" aria-label="Next sheet">${ic(8, 12, svg`<path d="M2 1.500L6 6l-4 4.500" stroke-width="1.300"/>`, "#9a9a9a")}</button>
      <button class="nav" aria-label="All sheets">${ic(14, 4, svg`<path d="M1 2h3M5.500 2h3M10 2h3" stroke-width="3"/>`)}</button>
      ${SHEETS.map((s) => html`<button class="st">${s}</button>`)}
      <button class="active"><span>Dashbord</span></button>
      <button class="plus" aria-label="New sheet">${ic(12, 12, svg`<path d="M6 .5v11M.5 6h11"/>`)}</button>
      <div class="hscroll">
        ${ic(4, 12, svg`<path d="M2 1v2M2 5v2M2 9v2" stroke-width="2"/>`)}
        <div class="htrack">
          ${ic(8, 10, svg`<path d="M7 1v8L1 5z" fill="#6e6e6e"/>`, "none")}
          <div class="hthumb"></div>
          ${ic(8, 10, svg`<path d="M1 1v8l6-4z" fill="#6e6e6e"/>`, "none")}
        </div>
      </div>
    </div>`;
  }

  private statusBar() {
    return html`<div class="status">
      <span>Ready</span>
      <button class="acc">${ic(15, 14, svg`<circle cx="6" cy="2.500" r="1.700"/><path d="M1 4.500l3.500 1.200V8L3 13M11 4.500L7.500 5.700V8M4.500 5.700h3M8.500 8l5 5.500M13.500 8l-5 5.500" stroke-width="1.200"/>`)}Accessibility: Investigate</button>
      <div class="views">
        <button class="view" aria-label="Normal view">${ic(14, 14, svg`<path d="M1 1h12v12H1zM5 1v12M9 1v12M1 5h12M1 9h12"/>`, "#222")}</button>
        <button class="view" aria-label="Page layout view">${ic(14, 14, svg`<path d="M1 1h12v12H1zM4 3.500h6v8H4zM5.500 6h3M5.500 8h3M5.500 10h3"/>`, "#222")}</button>
        <button class="view on" aria-label="Page break view">${ic(14, 14, svg`<path d="M1 1h12v12H1zM5 1v7M9 1v7M1 8h8"/>`, "#222")}</button>
      </div>
      <div class="zoomer">
        <button aria-label="Zoom out">${ic(9, 9, svg`<path d="M0 4.500h9"/>`)}</button>
        <input type="range" min="0" max="100" value="35" aria-label="Zoom">
        <button aria-label="Zoom in">${ic(9, 9, svg`<path d="M0 4.500h9M4.500 0v9"/>`)}</button>
        <span class="pct">70%</span>
      </div>
    </div>`;
  }

  private taskBar() {
    return html`<footer class="taskbar">
      <button class="start" aria-label="Start">${ic(16, 16, svg`<path d="M0 2.500L7 1.500V7.500H0zM8 1.300L16 0V7.500H8zM0 8.500H7V14.500L0 13.500zM8 8.500H16V16L8 14.700z" fill="#fff"/>`, "none")}</button>
      <label class="tsearch">${ic(17, 17, svg`<circle cx="10.500" cy="6.500" r="5.500" stroke-width="1.300"/><path d="M6.500 10.500L.8 16.300" stroke-width="1.300"/>`, "#222")}
        <input type="search" placeholder="Type here to search" aria-label="Type here to search">
        ${ic(62, 26, svg`<path d="M24 1q2 10 11 12-9 2-11 12-2-10-11-12Q22 11 24 1z" fill="#f7c31e"/><path d="M47 11q1 5 5 6-4 1-5 6-1-5-5-6 4-1 5-6z" fill="#f7c31e"/><path d="M4.500 19l1.500 2 3-.5-1.500 2.500L9 25l-3-.5L4.500 26l-.8-2.500L1 22l3-.5z" fill="#2a8bd8"/><circle cx="41" cy="3.500" r="2.300" fill="#ee6c3a"/><circle cx="59" cy="23" r="2.300" fill="#6cb85c"/>`, "none")}
      </label>
      <button class="app view" aria-label="Task view">${ic(16, 16, svg`<path d="M1 0v2.500h10V0M1 16v-2.500h10V16M1 5h10v6H1zM13.500 0v16M12.500 5h3v3h-3z" stroke-width="1.200"/>`, "#fff")}</button>
      <button class="app" aria-label="Copilot">${copilotIcon()}</button>
      <button class="app" aria-label="Store">${ic(24, 24, svg`<path d="M8 6V3.500A1.500 1.500 0 0 1 9.500 2h5A1.500 1.500 0 0 1 16 3.500V6" stroke="#2a9be0" stroke-width="2"/><rect x="1" y="5" width="22" height="18" rx="2" fill="#f3f3f3"/><path d="M8 9.500h3.500V13H8z" fill="#f25022"/><path d="M12.500 9.500H16V13h-3.500z" fill="#7fba00"/><path d="M8 14h3.500v3.500H8z" fill="#00a4ef"/><path d="M12.500 14H16v3.500h-3.500z" fill="#ffb900"/>`, "none")}</button>
      <button class="app" aria-label="Outlook">${ic(24, 24, svg`<path d="M5 9L15 1l8 8v12a1 1 0 0 1-1 1H6a1 1 0 0 1-1-1z" fill="#1b6fc0"/><path d="M8 4h12v11H8z" fill="#7cc4f5"/><path d="M5 10l9 6 10-6v11a1 1 0 0 1-1 1H6a1 1 0 0 1-1-1z" fill="#2fa3ee"/><rect x="0" y="6" width="13" height="13" rx="1.500" fill="#0a64ba"/><circle cx="6.500" cy="12.500" r="3.300" stroke="#fff" stroke-width="1.800"/>`, "none")}</button>
      <button class="app open" aria-label="Firefox">${ic(24, 24, svg`<circle cx="12" cy="13" r="11" fill="#ff7139"/><path d="M13 1c3 1.500 4 4 6 5 2.500 2 4 5 4 8-.5 6-5 10-11 10 6-1 9-6 7-11C17 9 13 7 13 1z" fill="#ffd43a"/><path d="M1.500 9C2 6 3 5 4 3c1 2 2.500 2.500 4 3-2 1-2 3-2 5z" fill="#ff4f5e"/><circle cx="12" cy="13.500" r="5.300" fill="#7a4be0"/><path d="M7 11c3-2 5 1 7 0-1 3-5 2-5 4-2-.5-2.500-2-2-4z" fill="#ffb23a"/>`, "none")}</button>
      <button class="app" aria-label="Microsoft 365 Copilot"><span class="m365">${copilotIcon()}<small>M365</small></span></button>
      <button class="app open" aria-label="File Explorer">${ic(24, 22, svg`<path d="M1 3a1 1 0 0 1 1-1h7l2 3h11a1 1 0 0 1 1 1v14H1z" fill="#f4b928"/><path d="M1 8h22v12H1z" fill="#ffd86b"/><path d="M6 20v-5a2 2 0 0 1 2-2h8a2 2 0 0 1 2 2v5h-3.500v-3h-5v3z" fill="#2a8bd8"/>`, "none")}</button>
      <button class="app open" aria-label="Edge">${ic(24, 24, svg`<circle cx="12" cy="12" r="11.500" fill="#1385d8"/><path d="M1 10C2 4 7 .5 12 .5c6 0 11.500 4 11.500 10 0 4-3 6-6 6-2.500 0-3.500-1-2.500-2.500C17 10 13 7 9 7 5 7 2 9 1 10z" fill="#4bc96c"/><path d="M1 10C2 4 7 .5 12 .5c3 0 6 1 8 3C13 2 3 4 1 10z" fill="#36b8e8"/><path d="M9 7c-3 3-3 9 1 12 3.500 2.500 8 2 11-.5-2 3.500-5.500 5-9 5C5 23.500.5 18 .5 12 1.500 9 5 7 9 7z" fill="#0c59a4"/><path d="M10 11c-2 4 2 9 8 8 2-.3 3-.8 3.500-1-3-.5-9 0-11.500-7z" fill="#2d2c2d"/>`, "none")}</button>
      <button class="app now" aria-label="Excel">${excelIcon(24)}</button>
      <div class="tray">
        <button class="weather">${ic(26, 26, svg`<circle cx="13" cy="13" r="9" fill="#f7a022"/><path d="M3 10a3.500 3.500 0 0 1 .5-6.500A4.500 4.500 0 0 1 11 5a2.800 2.800 0 0 1 0 5.500H3z" fill="#c9ddf0"/><path d="M14 24a3 3 0 0 1 0-6 4.500 4.500 0 0 1 8-.5 3.200 3.200 0 0 1 .5 6.500z" fill="#c9ddf0"/><circle cx="19.500" cy="6.500" r="6" fill="#cf3f12"/><path d="M18 5l1.700-1.500V10" stroke="#fff" stroke-width="1.300"/>`, "none")}<span>31°C</span><bdi lang="ar">مشمس جزئيًا</bdi></button>
        <button class="t" aria-label="Hidden icons">${ic(12, 8, svg`<path d="M1 7l5-5 5 5" stroke-width="1.300"/>`, "#fff")}</button>
        <button class="t" aria-label="Meet now">${ic(14, 16, svg`<rect x="2" y="4.500" width="8" height="7.500" rx="1.500" stroke-width="1.500"/><path d="M10 7l2.500-1.500v5.500L10 9.500M3 2q3.500-2 7 0M3 14.500q3.500 2 7 0"/>`, "#fff")}</button>
        <button class="t" aria-label="OneDrive">${cloud("#2391dc")}</button>
        <button class="t" aria-label="OneDrive personal">${cloud("#dcdcdc")}</button>
        <button class="t" aria-label="Network">${ic(18, 16, svg`<path d="M5.500 2.500H17v9H5.500V7M11 11.500v3M7 14.500h8M1 1.500h4.500V7H1zM3 7v7.500"/>`, "#fff")}</button>
        <button class="t" aria-label="Volume">${ic(18, 14, svg`<path d="M1 5h3l4-4v12L4 9H1zM10.500 5q1.500 2 0 4M12.800 3q3 4 0 8M15 1q4.500 6 0 12"/>`, "#fff")}</button>
        <button class="lang" lang="ar">ع</button>
        <button class="clock"><span>6:39 PM</span><span>9/29/2025</span></button>
        <button class="note" aria-label="Notifications">${ic(18, 18, svg`<path d="M1 1.500h16v12h-5.500L9.500 16.500 7.500 13.500H1z" stroke-width="1.200"/>`, "#fff")}</button>
        <span class="peek"></span>
      </div>
    </footer>`;
  }

  render() {
    return html`
      ${this.titleBar()}${this.tabRow()}${this.ribbon()}${this.formulaBar()}${this.sheet()}${this.sheetTabs()}${this.statusBar()}${this.taskBar()}
      <div class="mark" aria-hidden="true"><div class="ar" lang="ar">مستقل</div><div class="en">mostaql.com</div></div>
    `;
  }
}
